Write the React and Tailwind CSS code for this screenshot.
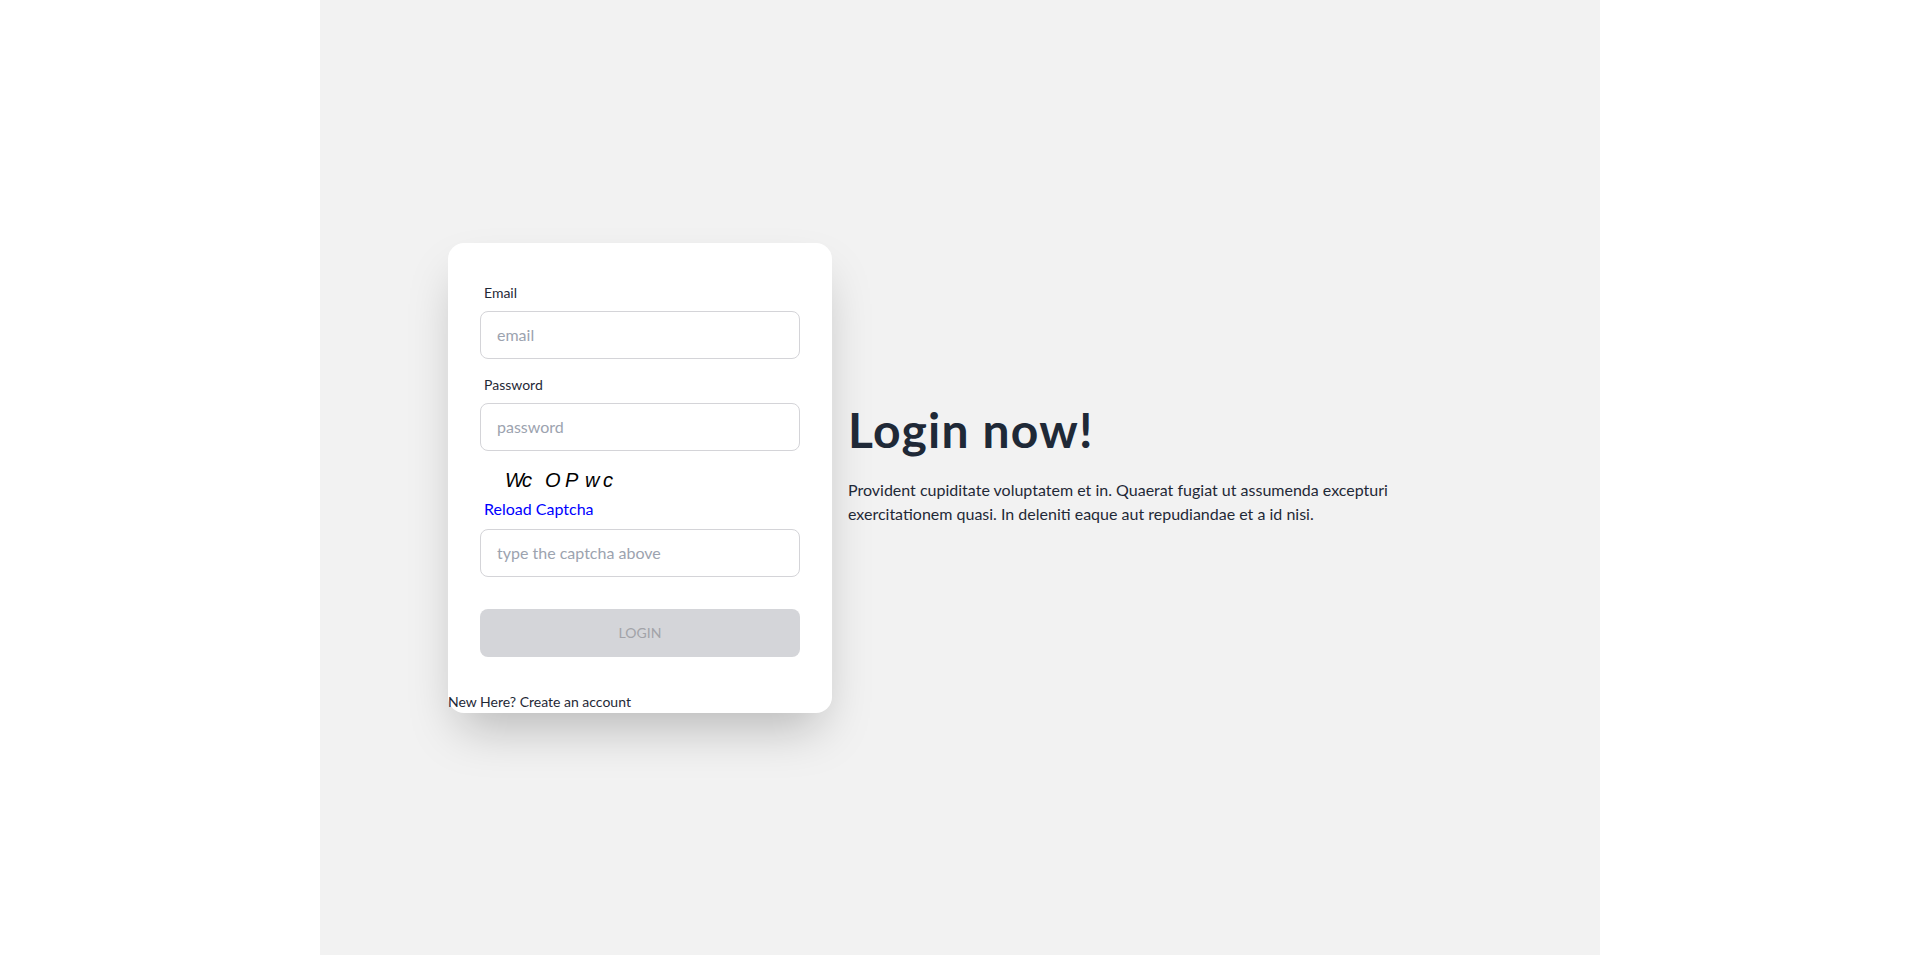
import React from "react";

const font = { fontFamily: 'Lato, "Noto Sans", sans-serif' };

export default function App() {
  const chars = [
    ["W", "w-[17px]"],
    ["c", "w-[23px]"],
    ["O", "w-[20px]"],
    ["P", "w-[20px]"],
    ["w", "w-[18px]"],
    ["c", "w-[12px]"],
  ];
  return (
    <div className="w-full min-h-screen bg-white" style={font}>
      <div className="w-[1280px] mx-auto min-h-screen bg-[#f2f2f2] flex items-center justify-center text-[#1f2937]">
        <div className="flex items-center gap-4">
          <div className="w-96 bg-white rounded-2xl shadow-2xl flex flex-col">
            <div className="p-8 flex flex-col gap-2">
              <div className="flex flex-col">
                <label className="px-1 py-2 text-sm leading-5">Email</label>
                <input
                  placeholder="email"
                  className="h-12 w-full rounded-lg border border-[#d4d4d8] px-4 text-base bg-white placeholder:text-[#9ca3af] outline-none"
                />
              </div>
              <div className="flex flex-col">
                <label className="px-1 py-2 text-sm leading-5">Password</label>
                <input
                  placeholder="password"
                  type="password"
                  className="h-12 w-full rounded-lg border border-[#d4d4d8] px-4 text-base bg-white placeholder:text-[#9ca3af] outline-none"
                />
              </div>
              <div className="flex flex-col">
                <div className="px-1 pt-2 flex flex-col items-start">
                  <div className="h-[30px] flex items-center pb-[4px] pl-[21px] text-black">
                    {chars.map(([c, w], i) => (
                      <span
                        key={i}
                        className={`inline-block italic text-[20px] leading-none ${w}`}
                        style={{ fontFamily: '"Liberation Sans", Arial, sans-serif' }}
                      >
                        {c}
                      </span>
                    ))}
                  </div>
                  <a className="text-base leading-6 text-[#0000ff] cursor-pointer">Reload Captcha</a>
                </div>
                <input
                  placeholder="type the captcha above"
                  className="mt-2 h-12 w-full rounded-lg border border-[#d4d4d8] px-4 text-base bg-white placeholder:text-[#9ca3af] outline-none"
                />
              </div>
              <div className="mt-6">
                <button className="h-12 w-full rounded-lg bg-[#d4d5d9] text-sm text-[#a2a3a8] uppercase">
                  Login
                </button>
              </div>
            </div>
            <p className="text-sm leading-5 mt-[3px] mb-[1px]">New Here? Create an account</p>
          </div>
          <div className="w-[624px]">
            <h1 className="text-5xl leading-none font-bold tracking-[0.025em]">Login now!</h1>
            <p className="py-6 text-base leading-6">
              Provident cupiditate voluptatem et in. Quaerat fugiat ut assumenda excepturi exercitationem quasi. In deleniti eaque aut repudiandae et a id nisi.
            </p>
          </div>
        </div>
      </div>
    </div>
  );
}
